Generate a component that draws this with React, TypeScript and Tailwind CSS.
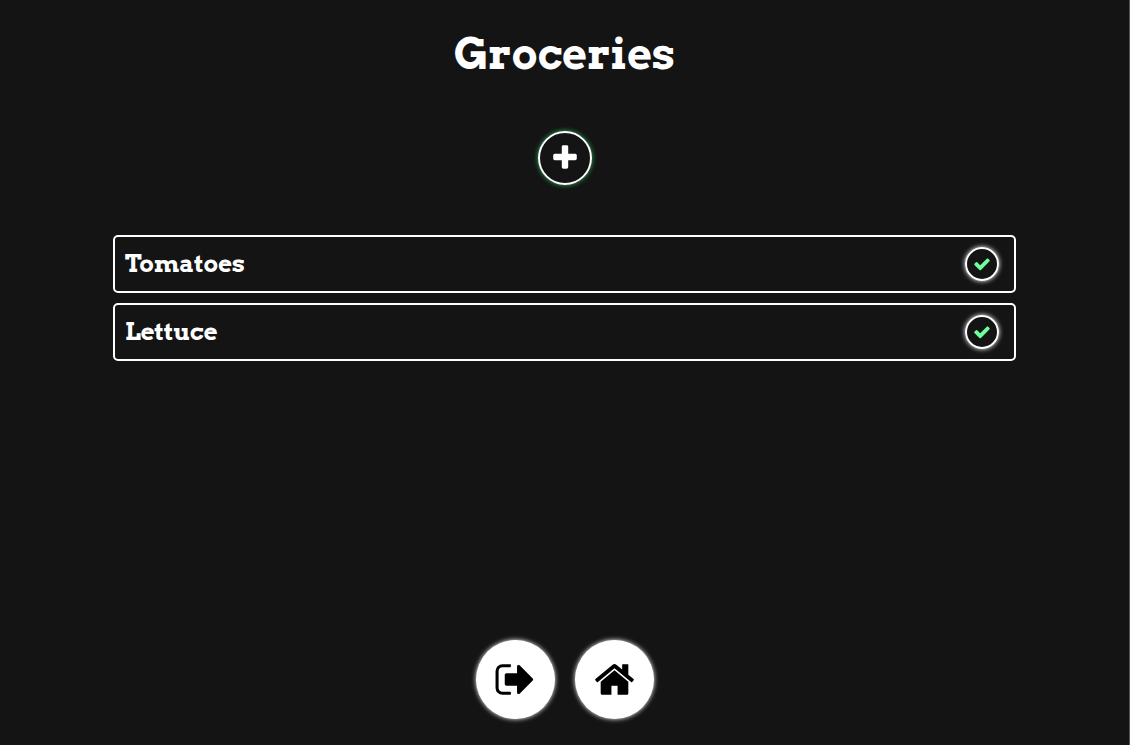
import type { ReactNode } from "react";

const PLUS =
  "M1600 736v192q0 40-28 68t-68 28h-416v416q0 40-28 68t-68 28h-192q-40 0-68-28t-28-68v-416h-416q-40 0-68-28t-28-68v-192q0-40 28-68t68-28h416v-416q0-40 28-68t68-28h192q40 0 68 28t28 68v416h416q40 0 68 28t28 68z";
const CHECK =
  "M1671 566q0 40-28 68l-724 724-136 136q-28 28-68 28t-68-28l-136-136-362-362q-28-28-28-68t28-68l136-136q28-28 68-28t68 28l294 295 656-657q28-28 68-28t68 28l136 136q28 28 28 68z";
const SIGN_OUT =
  "M704 1440q0 4 1 20t.5 26.5-3 23.5-10 19.5-20.5 6.5h-320q-119 0-203.5-84.5t-84.5-203.5v-704q0-119 84.5-203.5t203.5-84.5h320q13 0 22.5 9.5t9.5 22.5q0 4 1 20t.5 26.5-3 23.5-10 19.5-20.5 6.5h-320q-66 0-113 47t-47 113v704q0 66 47 113t113 47h312l11.5 1 11.5 3 8 5.5 7 9 2 13.5zm928-544q0 26-19 45l-544 544q-19 19-45 19t-45-19-19-45v-288h-448q-26 0-45-19t-19-45v-384q0-26 19-45t45-19h448v-288q0-26 19-45t45-19 45 19l544 544q19 19 19 45z";
const HOME =
  "M1472 992v480q0 26-19 45t-45 19h-384v-384h-256v384h-384q-26 0-45-19t-19-45v-480q0-1 .5-3t.5-3l575-474 575 474q1 2 1 6zm223-69l-62 74q-8 9-21 11h-3q-13 0-21-7l-692-577-692 577q-12 8-24 7-13-2-21-11l-62-74q-8-10-7-23.5t11-21.5l719-599q32-26 76-26t76 26l244 204v-195q0-14 9-23t23-9h192q14 0 23 9t9 23v408l219 182q10 8 11 21.5t-7 23.5z";

const items = ["Tomatoes", "Lettuce"];

function Icon({ path, className }: { path: string; className: string }) {
  return (
    <svg viewBox="0 0 1792 1792" fill="currentColor" aria-hidden="true" className={className}>
      <path d={path} />
    </svg>
  );
}

function NavLink({ label, children }: { label: string; children: ReactNode }) {
  return (
    <a
      href="#"
      aria-label={label}
      className="flex size-[79px] items-center justify-center rounded-full bg-white text-black shadow-[0_0_5px_white]"
    >
      {children}
    </a>
  );
}

export default function App() {
  return (
    <div className="flex min-h-screen flex-col items-center border-r border-[#555555] bg-[#141414] font-['Arvo','DejaVu_Serif',serif] font-bold text-white">
      <h1 className="mt-7 text-[43px] leading-[53px]">Groceries</h1>

      <button
        type="button"
        aria-label="Add item"
        className="mt-[50px] flex size-[54px] items-center justify-center rounded-full border-2 border-white shadow-[0_0_5px_#2bb45a]"
      >
        <Icon path={PLUS} className="size-[30px]" />
      </button>

      <ul className="mt-[50px] flex w-4/5 flex-col gap-2.5">
        {items.map((item) => (
          <li
            key={item}
            className="flex items-center justify-between rounded-[5px] border-2 border-white py-2.5 pr-[15px] pl-2.5"
          >
            <span className="text-2xl leading-8">{item}</span>
            <button
              type="button"
              aria-label={`Complete ${item}`}
              className="flex size-[34px] items-center justify-center rounded-full border-2 border-white text-[#6dff9c] shadow-[0_0_5px_white]"
            >
              <Icon path={CHECK} className="size-[18px]" />
            </button>
          </li>
        ))}
      </ul>

      <nav className="mt-auto mb-[26px] flex gap-5 pt-8">
        <NavLink label="Sign out">
          <Icon path={SIGN_OUT} className="size-[43px]" />
        </NavLink>
        <NavLink label="Home">
          <Icon path={HOME} className="size-[43px]" />
        </NavLink>
      </nav>
    </div>
  );
}
